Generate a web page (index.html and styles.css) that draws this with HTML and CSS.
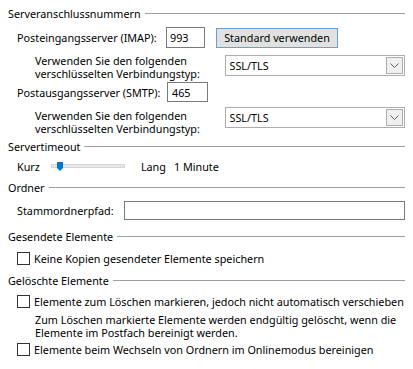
FILE: index.html
```html
<!DOCTYPE html>
<html lang="de">
<head>
  <meta charset="UTF-8" />
  <title>Weitere Einstellungen</title>
  <link rel="stylesheet" href="styles.css">
</head>
<body>
  <div class="page">

    <div class="group-title">Serveranschlussnummern</div>

    <div class="row row-imap">
      <span class="label label-port">Posteingangsserver (IMAP):</span>
      <div class="textbox port-in">993</div>
      <div class="button">Standard verwenden</div>
    </div>

    <div class="row row-enc">
      <span class="enc-text">Verwenden Sie den folgenden<br>verschlüsselten Verbindungstyp:</span>
      <div class="select">
        <span class="select-value">SSL/TLS</span>
        <span class="select-arrow">
          <svg width="9" height="5" viewBox="0 0 9 5"><path d="M0.5 0.5 L4.5 4.5 L8.5 0.5" fill="none" stroke="#606060" stroke-width="1"/></svg>
        </span>
      </div>
    </div>

    <div class="row row-smtp">
      <span class="label label-port">Postausgangsserver (SMTP):</span>
      <div class="textbox port-out">465</div>
    </div>

    <div class="row row-enc row-enc2">
      <span class="enc-text">Verwenden Sie den folgenden<br>verschlüsselten Verbindungstyp:</span>
      <div class="select">
        <span class="select-value">SSL/TLS</span>
        <span class="select-arrow">
          <svg width="9" height="5" viewBox="0 0 9 5"><path d="M0.5 0.5 L4.5 4.5 L8.5 0.5" fill="none" stroke="#606060" stroke-width="1"/></svg>
        </span>
      </div>
    </div>

    <div class="group-title title-timeout">Servertimeout</div>

    <div class="row row-slider">
      <span class="label">Kurz</span>
      <div class="slider">
        <div class="slider-track"></div>
        <svg class="slider-thumb" width="6" height="9" viewBox="0 0 6 9"><path d="M0 0 H6 V6 L3 9 L0 6 Z" fill="#0078d7"/></svg>
      </div>
      <span class="label lang">Lang</span>
      <span class="label">1 Minute</span>
    </div>

    <div class="group-title title-folder">Ordner</div>

    <div class="row row-folder">
      <span class="label">Stammordnerpfad:</span>
      <div class="textbox folder-path"></div>
    </div>

    <div class="group-title title-sent">Gesendete Elemente</div>

    <label class="check row-check1">
      <span class="box"></span>
      <span>Keine Kopien gesendeter Elemente speichern</span>
    </label>

    <div class="group-title title-deleted">Gelöschte Elemente</div>

    <label class="check row-check2">
      <span class="box"></span>
      <span>Elemente zum Löschen markieren, jedoch nicht automatisch verschieben</span>
    </label>

    <p class="note">Zum Löschen markierte Elemente werden endgültig gelöscht, wenn die<br>Elemente im Postfach bereinigt werden.</p>

    <label class="check row-check3">
      <span class="box"></span>
      <span>Elemente beim Wechseln von Ordnern im Onlinemodus bereinigen</span>
    </label>

  </div>
</body>
</html>
```

FILE: styles.css
```css
:root {
  --text: #000;
  --line: #a0a0a0;
  --border: #7a7a7a;
  --combo: #adadad;
}

* {
  margin: 0;
  padding: 0;
  box-sizing: border-box;
}

html, body {
  background: #fff;
  color: var(--text);
  font-family: 'Noto Sans', 'Open Sans', sans-serif;
  font-size: 10.8px;
}

.page {
  padding: 5px 8px 0 8px;
  width: 413px;
}

.group-title {
  display: flex;
  align-items: center;
  height: 16px;
  white-space: nowrap;
}

.group-title::after {
  content: "";
  flex: 1;
  border-top: 1px solid var(--line);
  margin-left: 4px;
}

.row {
  display: flex;
  align-items: center;
  padding-left: 9px;
}

.label { white-space: nowrap; }

.label-port { width: 149px; }

.textbox {
  background: #fff;
  border: 1px solid var(--border);
  height: 21px;
  padding: 0 0 0 3px;
  display: flex;
  align-items: center;
}

.row-imap {
  margin-top: 6px;
  height: 21px;
}

.port-in { width: 39px; }

.button {
  margin-left: 11px;
  width: 122px;
  height: 20px;
  background: #e1e1e1;
  border: 1px solid #6a9fd4;
  display: flex;
  align-items: center;
  justify-content: center;
}

.row-enc {
  align-items: flex-start;
  margin-top: 7px;
  padding-left: 27px;
  height: 24px;
}

.enc-text {
  line-height: 13px;
  width: 191px;
  margin-top: -1px;
}

.select {
  width: 180px;
  height: 21px;
  border: 1px solid var(--combo);
  display: flex;
  align-items: center;
  justify-content: space-between;
  padding: 1px 1px 1px 3px;
}

.select-arrow {
  width: 17px;
  height: 17px;
  border: 1px solid var(--combo);
  background: #f0f0f0;
  display: flex;
  align-items: center;
  justify-content: center;
}

.row-smtp {
  margin-top: 3px;
  height: 20px;
}

.port-out {
  width: 41px;
  height: 20px;
  margin-left: 1px;
  padding-left: 4px;
}

.row-enc2 { margin-top: 5px; }

.row-enc2 .enc-text { margin-top: 2px; }

.title-timeout { margin-top: 7px; }

.row-slider {
  margin-top: 4px;
  height: 16px;
}

.slider {
  position: relative;
  width: 74px;
  height: 9px;
  margin-left: 11px;
  display: flex;
  align-items: center;
}

.slider-track {
  width: 100%;
  height: 4px;
  background: #e7eaea;
  border: 1px solid #d6d6d6;
}

.slider-thumb {
  position: absolute;
  left: 6px;
  top: 0;
}

.lang {
  margin-left: 16px;
  margin-right: 8px;
}

.title-folder { margin-top: 5px; }

.row-folder {
  margin-top: 6px;
  gap: 10px;
}

.folder-path {
  width: 285px;
  height: 19px;
}

.title-sent { margin-top: 8px; }

.check {
  display: flex;
  align-items: center;
  gap: 4px;
  padding-left: 9px;
  height: 15px;
  white-space: nowrap;
}

.box {
  width: 13px;
  height: 13px;
  border: 1px solid #333;
  background: #fff;
  flex: none;
}

.row-check1 { margin-top: 7px; }

.title-deleted { margin-top: 6px; }

.row-check2 { margin-top: 6px; }

.note {
  padding-left: 27px;
  margin-top: 4px;
  line-height: 13px;
}

.row-check3 { margin-top: 3px; }
```
